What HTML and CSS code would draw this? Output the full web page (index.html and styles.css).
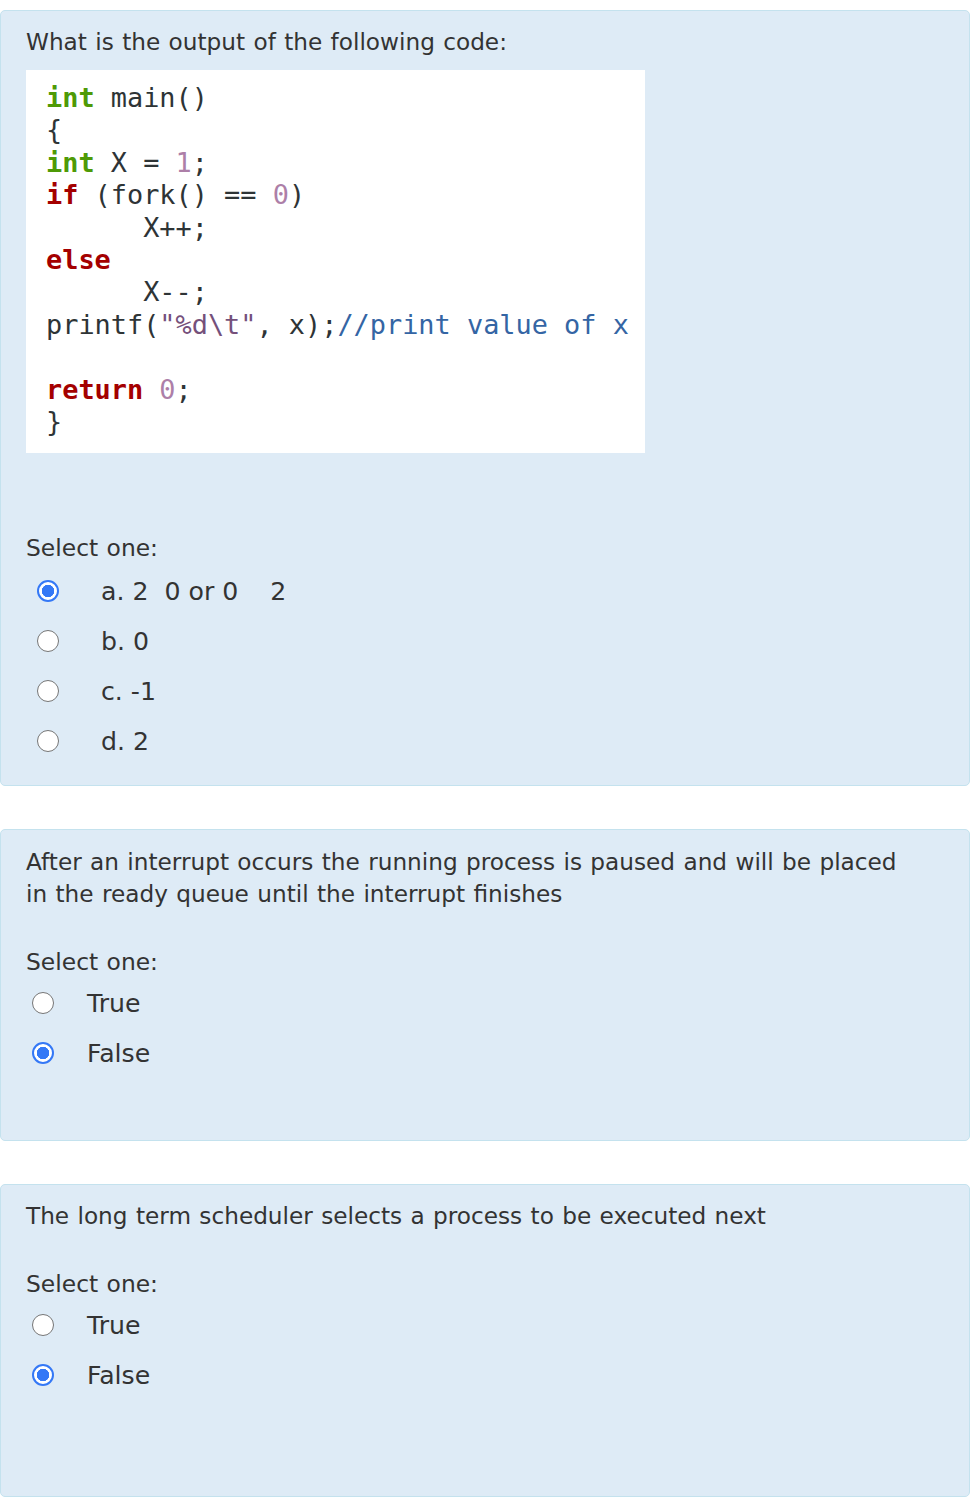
FILE: index.html
```html
<!DOCTYPE html>
<html>
<head>
<meta charset="utf-8">
<link rel="stylesheet" href="styles.css">
</head>
<body>
<div class="page">
  <section class="card card--code">
    <p class="qtext">What is the output of the following code:</p>
    <pre class="code"><span class="ty">int</span> main()
{
<span class="ty">int</span> X = <span class="num">1</span>;
<span class="kw">if</span> (fork() == <span class="num">0</span>)
      X++;
<span class="kw">else</span>
      X--;
printf(<span class="str">"%d\t"</span>, x);<span class="cm">//print value of x</span>

<span class="kw">return</span> <span class="num">0</span>;
}</pre>
    <p class="prompt">Select one:</p>
    <ul class="options options--lettered">
      <li class="option"><span class="radio radio--checked"></span><span class="label">a. 2&nbsp;&nbsp;0 or 0&nbsp;&nbsp;&nbsp;&nbsp;2</span></li>
      <li class="option"><span class="radio"></span><span class="label">b. 0</span></li>
      <li class="option"><span class="radio"></span><span class="label">c. -1</span></li>
      <li class="option"><span class="radio"></span><span class="label">d. 2</span></li>
    </ul>
  </section>

  <section class="card card--mid">
    <p class="qtext qtext--spaced">After an interrupt occurs the running process is paused and will be placed in the ready queue until the interrupt finishes</p>
    <p class="prompt">Select one:</p>
    <ul class="options">
      <li class="option"><span class="radio"></span><span class="label">True</span></li>
      <li class="option"><span class="radio radio--checked"></span><span class="label">False</span></li>
    </ul>
  </section>

  <section class="card card--tall">
    <p class="qtext qtext--spaced">The long term scheduler selects a process to be executed next</p>
    <p class="prompt">Select one:</p>
    <ul class="options">
      <li class="option"><span class="radio"></span><span class="label">True</span></li>
      <li class="option"><span class="radio radio--checked"></span><span class="label">False</span></li>
    </ul>
  </section>
</div>
</body>
</html>
```

FILE: styles.css
```css
html, body {
  margin: 0;
  padding: 0;
  background: #ffffff;
}

.page {
  padding: 10px 8px 0 0;
  display: flex;
  flex-direction: column;
  gap: 43px;
  font-family: "DejaVu Sans", Verdana, sans-serif;
  color: #333333;
}

.card {
  background: #deebf6;
  border: 1px solid #c4e2ee;
  border-radius: 5px;
  padding: 15px 45px 19px 25px;
}

.card--mid {
  padding-top: 16px;
  padding-bottom: 62px;
}

.card--tall {
  padding-bottom: 96px;
}

.qtext {
  margin: 0;
  font-size: 23.2px;
  line-height: 32px;
  word-spacing: 1px;
}

.qtext--spaced {
  margin-bottom: 36px;
}

.code {
  margin: 12px 0 79px 0;
  width: 619px;
  box-sizing: border-box;
  background: #ffffff;
  padding: 12px 20px 15px 20px;
  font-family: "DejaVu Sans Mono", "Liberation Mono", monospace;
  font-size: 26.9px;
  line-height: 32.4px;
  color: #2e3436;
  word-spacing: 0;
}

.ty { color: #4e9a06; font-weight: bold; }
.kw { color: #a40000; font-weight: bold; }
.num { color: #ad7fa8; }
.str { color: #75507b; }
.cm { color: #3465a4; }

.prompt {
  margin: 0;
  font-size: 23.4px;
  line-height: 32px;
  word-spacing: 1px;
}

.options {
  list-style: none;
  margin: 0;
  padding: 0 0 0 6px;
}

.options--lettered {
  margin-top: 2px;
  padding-left: 11px;
}

.option {
  display: flex;
  align-items: center;
  height: 50px;
  font-size: 25.2px;
}

.radio {
  flex: none;
  width: 22px;
  height: 22px;
  box-sizing: border-box;
  border-radius: 50%;
  border: 1.5px solid #767676;
  background: #ffffff;
  margin-right: 33px;
}

.options--lettered .radio {
  margin-right: 42px;
}

.radio--checked {
  border: 2px solid #3478f6;
  background: radial-gradient(circle, #3478f6 0 6px, #ffffff 6.5px);
}

.label {
  white-space: pre;
}
```
